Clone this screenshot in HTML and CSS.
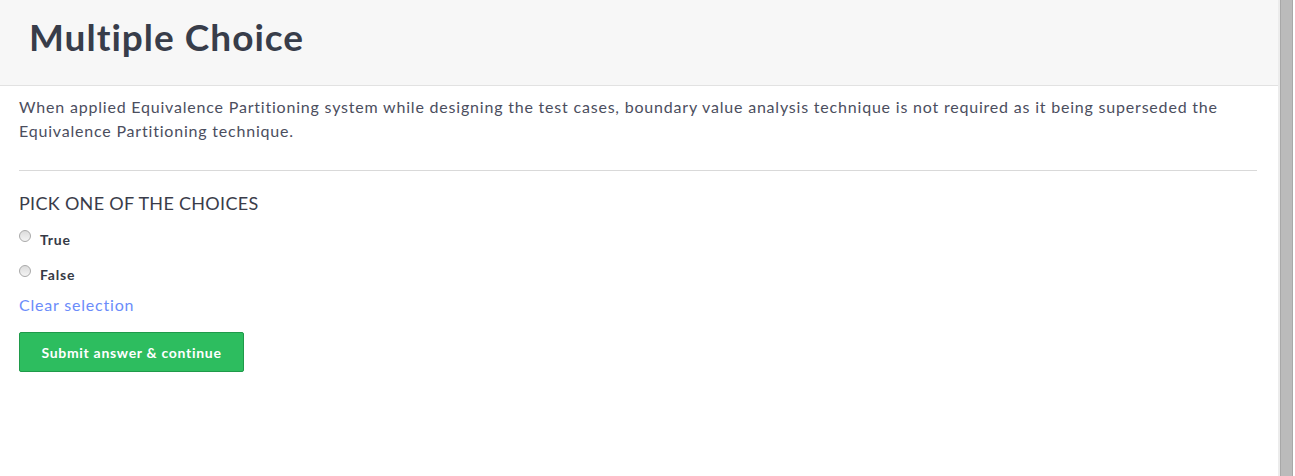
FILE: index.html
```html
<!DOCTYPE html>
<html>
<head>
<meta charset="utf-8">
<link rel="stylesheet" href="styles.css">
</head>
<body>
<div class="page">
  <main class="content">
    <header class="header">
      <h1 class="title">Multiple Choice</h1>
    </header>
    <section class="body">
      <p class="question">When applied Equivalence Partitioning system while designing the test cases, boundary value analysis technique is not required as it being superseded the Equivalence Partitioning technique.</p>
      <hr class="divider">
      <h2 class="pick">PICK ONE OF THE CHOICES</h2>
      <label class="choice"><span class="radio"></span><span class="choice-text">True</span></label>
      <label class="choice"><span class="radio"></span><span class="choice-text">False</span></label>
      <a class="clear">Clear selection</a>
      <button class="submit">Submit answer &amp; continue</button>
    </section>
  </main>
  <div class="scrollbar"><div class="thumb"></div></div>
</div>
</body>
</html>
```
FILE: styles.css
```css
* { box-sizing: border-box; }
html, body { margin: 0; padding: 0; height: 476px; overflow: hidden; background: #fff; }
body { font-family: Lato, "Open Sans", sans-serif; color: #3c4150; }
.page { display: flex; height: 476px; }
.content { flex: 1; min-width: 0; }
.header {
  background: #f7f7f7;
  border-bottom: 1px solid #e2e2e2;
  height: 86px;
  padding: 16px 30px 0 29px;
}
.title {
  margin: 0;
  font-size: 37px;
  font-weight: 700;
  color: #383d4a;
  line-height: 42px;
  letter-spacing: 1px;
}
.body { padding: 9px 21px 0 19px; }
.question {
  margin: 0;
  font-size: 16px;
  line-height: 24px;
  color: #4b4e5e;
  letter-spacing: 0.8px;
}
.divider {
  border: 0;
  border-top: 1px solid #d9d9d9;
  margin: 27px 0 0;
}
.pick {
  margin: 20px 0 0;
  font-size: 18px;
  font-weight: 400;
  color: #3a3c4a;
  line-height: 24px;
  letter-spacing: 0.3px;
}
.choice {
  display: flex;
  align-items: flex-start;
  margin-top: 11px;
  height: 24px;
}
.choice + .choice { margin-top: 11px; }
.radio {
  width: 12px; height: 12px;
  border-radius: 50%;
  border: 1px solid #a9a9a9;
  background: linear-gradient(#dcdcdc, #f4f4f4);
  margin-top: 4px;
  margin-right: 9px;
}
.choice-text {
  font-size: 14px;
  font-weight: 700;
  color: #363a46;
  line-height: 24px;
  padding-top: 2px;
  letter-spacing: 0.8px;
}
.clear {
  display: block;
  margin-top: 8px;
  font-size: 16px;
  line-height: 24px;
  color: #6b8cfa;
  letter-spacing: 0.8px;
}
.submit {
  display: block;
  margin-top: 15px;
  width: 225px;
  height: 40px;
  background: #2dbd5f;
  border: 1px solid #1f9a4a;
  border-radius: 2px;
  color: #fff;
  font-family: Lato, "Open Sans", sans-serif;
  font-size: 14px;
  font-weight: 700;
  letter-spacing: 0.7px;
  padding: 0;
}
.scrollbar {
  width: 17px;
  flex: none;
  display: flex;
  background: #fff;
  padding-right: 2px;
  border-left: 2px solid #ececec;
}
.thumb {
  flex: 1;
  background: #bbbbbb;
  border-left: 1px solid #a8a8a8;
  border-right: 1px solid #a8a8a8;
}
```
